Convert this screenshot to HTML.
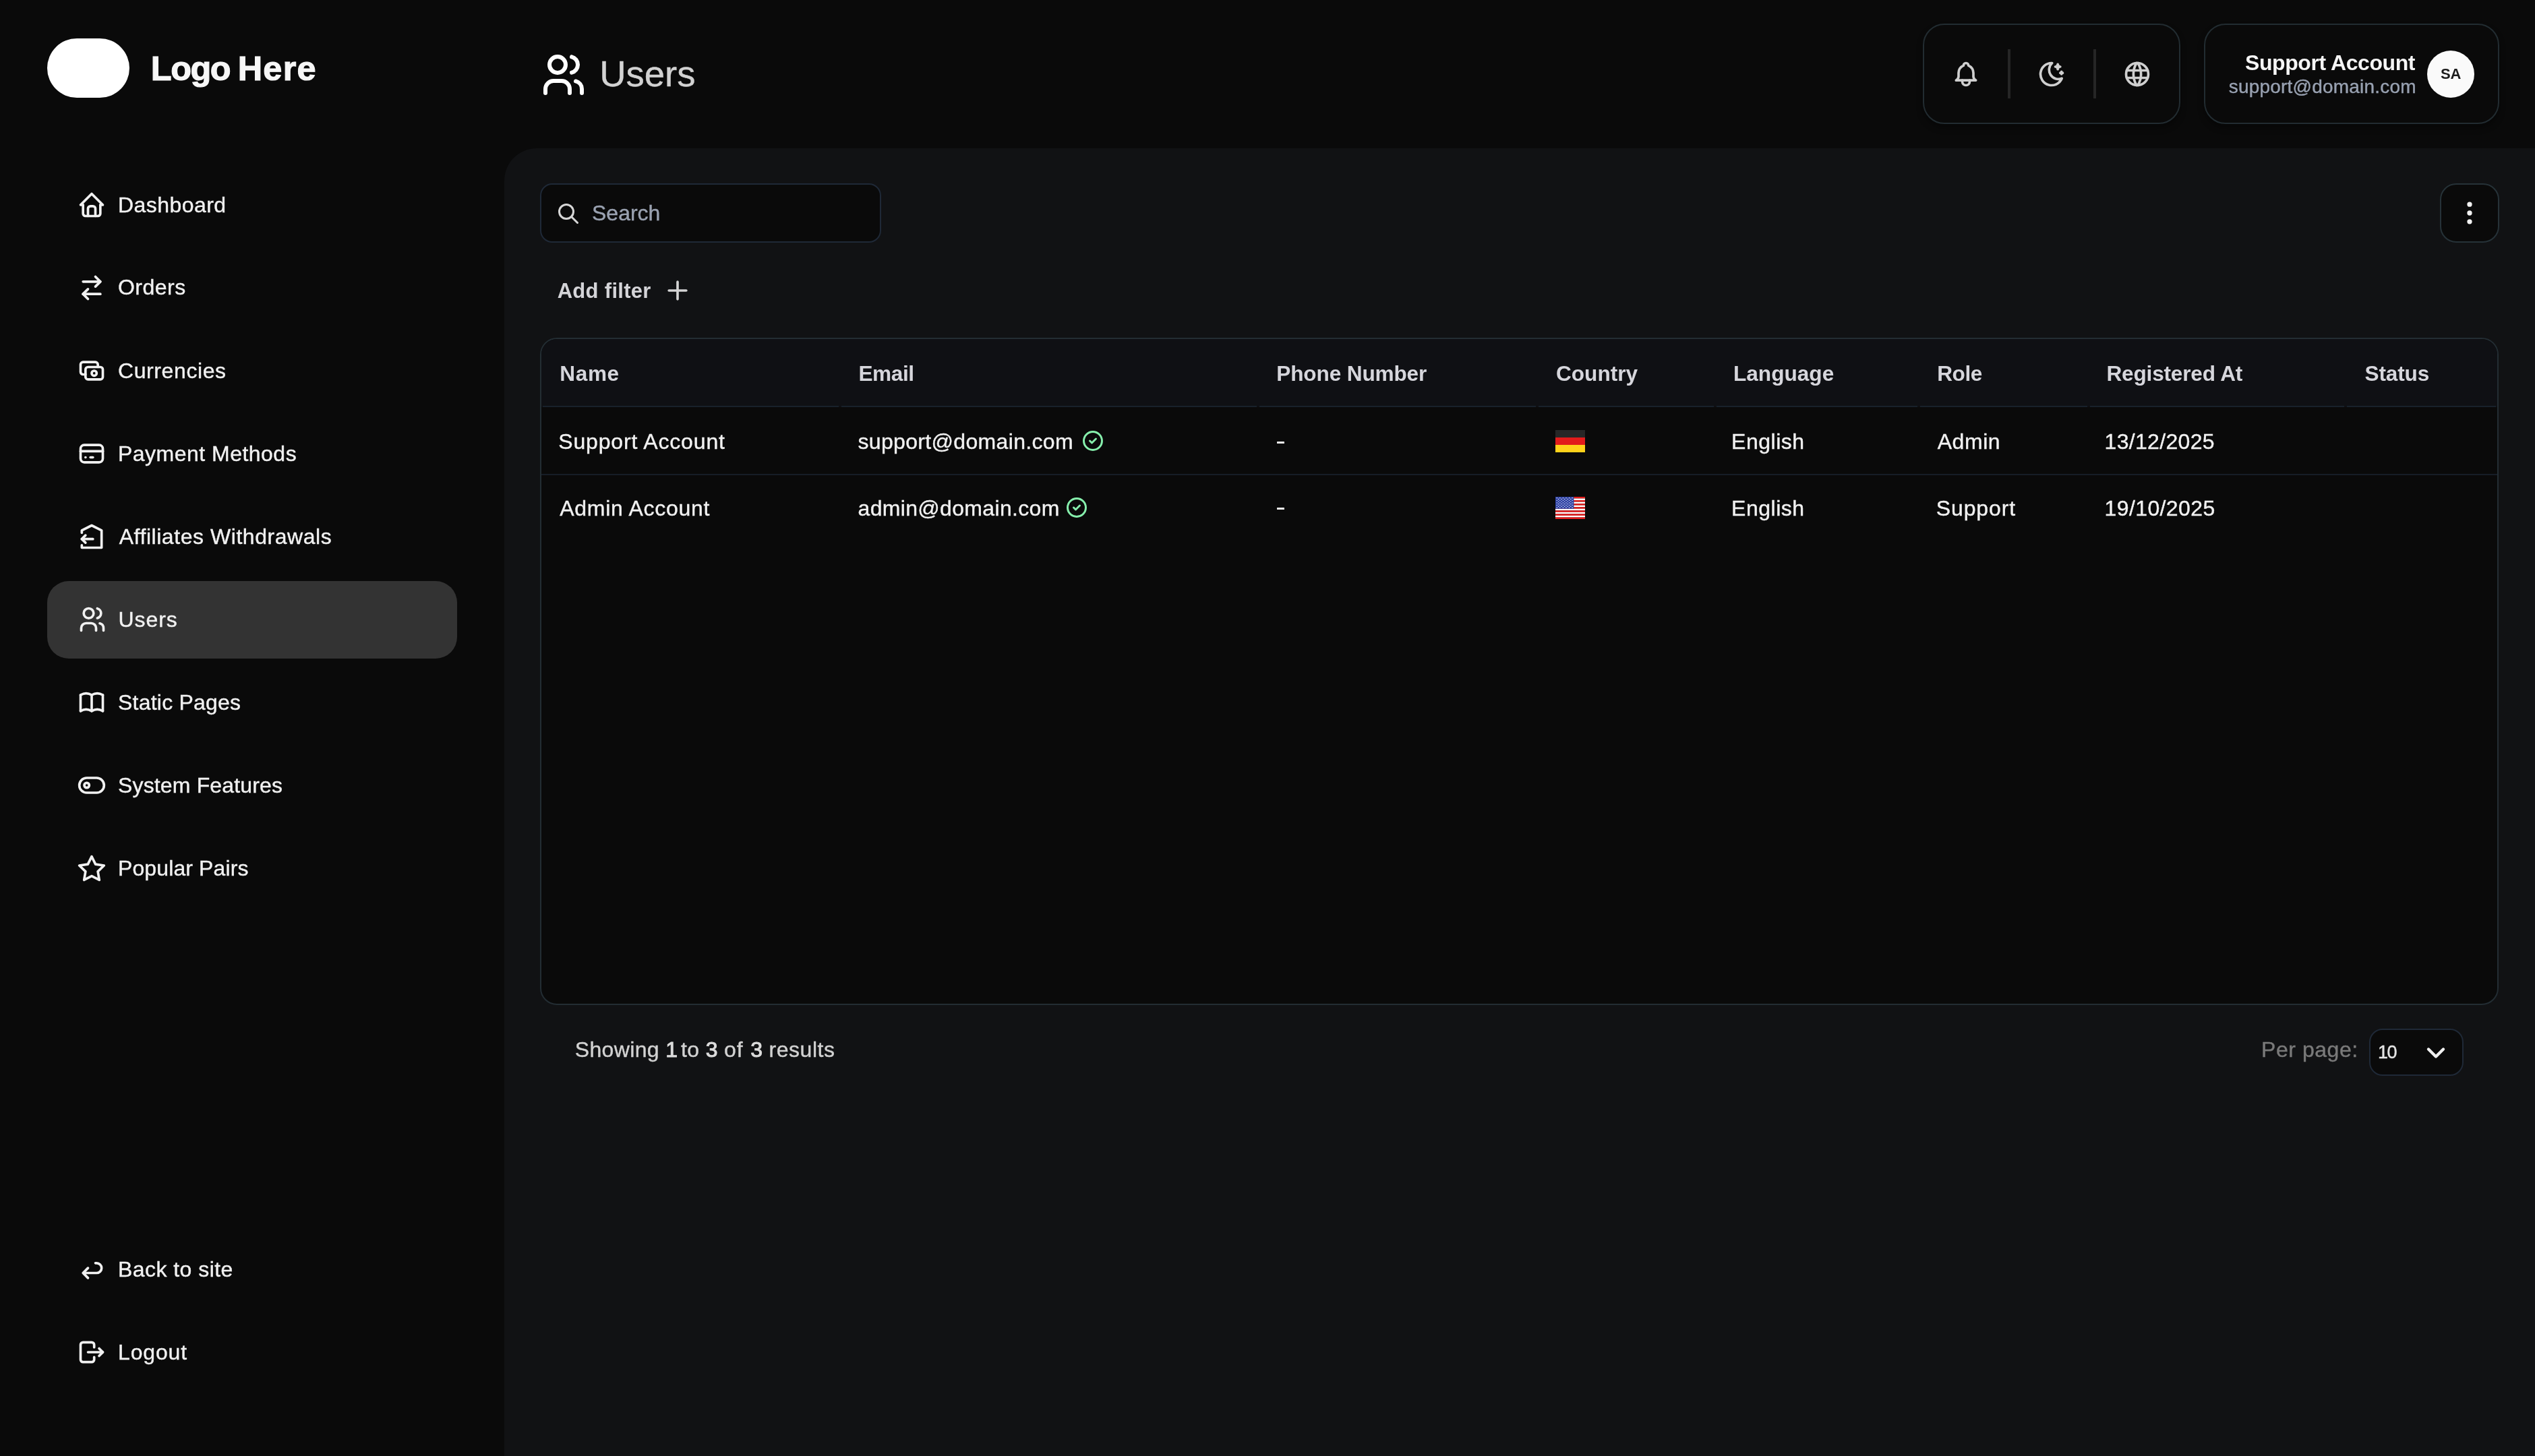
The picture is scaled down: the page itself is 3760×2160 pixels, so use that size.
<!DOCTYPE html>
<html lang="en">
<head>
<meta charset="utf-8">
<title>Users</title>
<style>
*{box-sizing:border-box;margin:0;padding:0}
html,body{width:3760px;height:2160px;overflow:hidden;background:#0a0a0a}
body{font-family:"Liberation Sans",sans-serif;color:#f2f2f2;position:relative;-webkit-font-smoothing:antialiased}
.abs{position:absolute}
#root{position:absolute;left:0;top:0;width:3760px;height:2160px;will-change:transform;transform:translateZ(0)}
svg.ic{display:block;fill:none;stroke:currentColor;stroke-width:2;stroke-linecap:round;stroke-linejoin:round}
/* sidebar */
.pill{left:70px;top:57px;width:121.5px;height:88px;border-radius:44px;background:#fff}
.logo{left:223.8px;top:72.5px;font-size:50.5px;font-weight:700;letter-spacing:-0.1px;word-spacing:-2.5px;color:#f7f7f7;line-height:58px;white-space:nowrap;-webkit-text-stroke:1.1px currentColor}
.nav{left:70px;width:608px;height:115px;border-radius:32px;display:flex;align-items:center;padding-left:44px;font-size:32px;color:#f1f1f1;white-space:nowrap}
.nav svg{width:44px;height:44px;margin-right:17px;flex:none;position:relative;top:-0.4px}
.nav.on{background:#333333}
/* header */
.hicon{left:800px;top:74.5px;width:72px;height:72px;color:#fff}
.htitle{left:889.2px;top:78.5px;font-size:54.5px;line-height:62px;color:#d2d2d2;letter-spacing:0.0px;white-space:nowrap}
.box{border:2px solid #222c31;background:#0a0a0a;border-radius:32px;box-shadow:0 6px 10px rgba(0,0,0,.35)}
.igrp{left:2852px;top:35px;width:382px;height:149px}
.igrp svg{position:absolute;top:51px;width:44px;height:44px;color:#cfcfcf}
.igrp i{position:absolute;top:36px;width:4px;height:73px;background:#262626}
.acct{left:3269px;top:35px;width:438px;height:149px}
.aname{right:123px;top:37.3px;font-size:32px;font-weight:700;letter-spacing:-0.42px;line-height:38px;color:#f5f5f5;white-space:nowrap}
.amail{right:121.3px;top:75.6px;font-size:28px;letter-spacing:0.2px;line-height:32px;color:#98a1b1;white-space:nowrap}
.avatar{left:329px;top:37.5px;width:70px;height:70px;border-radius:50%;background:#fafafa;color:#1c1c1c;font-weight:700;font-size:22px;display:flex;align-items:center;justify-content:center;letter-spacing:-0.4px}
/* panel */
.panel{left:748px;top:220px;width:3012px;height:1940px;background:#111214;border-top-left-radius:48px}
.search{left:801px;top:272px;width:506px;height:88px;border:2px solid #1f2937;border-radius:18px;background:#0a0a0a}
.search svg{position:absolute;left:22px;top:25px;width:36px;height:36px;color:#d6d6d6}
.search span{position:absolute;left:75px;top:22.7px;font-size:32px;line-height:38px;color:#9aa2b1}
.dots{left:3619px;top:272px;width:88px;height:88px;border:2px solid #263238;border-radius:24px;background:#0a0a0a}
.dots svg{position:absolute;left:20px;top:20px;width:44px;height:44px;color:#f2f2f2}
.addf{left:826.7px;top:413px;font-size:31px;font-weight:700;line-height:38px;color:#d4d4d8;white-space:nowrap;letter-spacing:0.3px}
.plus{left:983px;top:409px;width:44px;height:44px;color:#d4d4d4}
/* table */
.tbl{left:801px;top:501px;width:2905px;height:989.5px;border:2px solid #232d33;border-radius:25px;background:#0a0a0a;overflow:hidden}
.thead{position:absolute;left:0;top:0;width:100%;height:101px;background:#0f1014}
.th{position:absolute;top:0;height:101px;font-size:31.6px;font-weight:700;color:#d6d6dc;line-height:102px;padding-left:27px;white-space:nowrap}
.th::after{content:"";position:absolute;left:2px;right:2px;bottom:0;height:2px;background:#18212b}
.row{position:absolute;left:0;width:100%;height:99px}
.row .ln{position:absolute;left:0;right:0;bottom:-2px;height:2px;background:#161d27}
.td{position:absolute;top:0;height:99px;line-height:99px;font-size:32px;color:#f1f1f1;padding-left:26px;white-space:nowrap}
.flag{position:absolute;left:26.8px;top:34px;width:44.4px;height:33px;display:block}
.chk{position:absolute;top:32px;width:36px;height:36px;color:#86efac}
.nav,.td,.showing,.pp,.search span,.amail,.htitle,.sel span{-webkit-text-stroke:0.4px currentColor}
.dash{position:absolute;left:28.4px;width:11px;height:3.4px;background:#f1f1f1;border-radius:0.5px}
/* footer */
.showing{left:852.8px;top:1537.5px;font-size:32px;line-height:38px;color:#d2d2d2;letter-spacing:0.34px;white-space:nowrap}
.showing b{font-weight:400;color:#dcdcdc;-webkit-text-stroke:1px currentColor}
.pp{left:3354px;top:1537.5px;font-size:32px;line-height:38px;color:#7a7a7a;white-space:nowrap;letter-spacing:0.55px}
.sel{left:3514px;top:1526px;width:140px;height:70px;border:2px solid #1f2937;border-radius:20px;background:#0a0a0a}
.sel span{position:absolute;left:11px;top:17.3px;font-size:27px;line-height:32px;color:#e4e4e4;letter-spacing:-1.6px}
.sel svg{position:absolute;left:75px;top:12px;width:44px;height:44px;color:#f0f0f0;stroke-width:2.4}
</style>
</head>
<body>
<div id="root">
<div class="abs pill"></div>
<div class="abs logo"><span style="letter-spacing:-1.5px">Logo</span> <span style="letter-spacing:1.25px">Here</span></div>
<div class="abs nav" style="top:246.6px;letter-spacing:0.44px"><svg class="ic" viewBox="0 0 24 24"><path d="M5 12l-2 0l9 -9l9 9l-2 0"/><path d="M5 12v7a2 2 0 0 0 2 2h10a2 2 0 0 0 2 -2v-7"/><path d="M9 21v-6a2 2 0 0 1 2 -2h2a2 2 0 0 1 2 2v6"/></svg>Dashboard</div>
<div class="abs nav" style="top:369.4px;letter-spacing:0.48px"><svg class="ic" viewBox="0 0 24 24"><path d="M5 7h14"/><path d="M15 3l4 4l-4 4"/><path d="M19 17h-14"/><path d="M9 13l-4 4l4 4"/></svg>Orders</div>
<div class="abs nav" style="top:492.6px;letter-spacing:0.6px"><svg class="ic" viewBox="0 0 24 24"><path d="M7 9m0 2a2 2 0 0 1 2 -2h10a2 2 0 0 1 2 2v6a2 2 0 0 1 -2 2h-10a2 2 0 0 1 -2 -2z"/><path d="M14 14m-2 0a2 2 0 1 0 4 0a2 2 0 1 0 -4 0"/><path d="M17 9v-2a2 2 0 0 0 -2 -2h-10a2 2 0 0 0 -2 2v6a2 2 0 0 0 2 2h2"/></svg>Currencies</div>
<div class="abs nav" style="top:615.7px;letter-spacing:0.48px"><svg class="ic" viewBox="0 0 24 24"><path d="M3 5m0 3a3 3 0 0 1 3 -3h12a3 3 0 0 1 3 3v8a3 3 0 0 1 -3 3h-12a3 3 0 0 1 -3 -3z"/><path d="M3 10l18 0"/><path d="M7 15l.01 0"/><path d="M11 15l2 0"/></svg>Payment Methods</div>
<div class="abs nav" style="top:738.9px;letter-spacing:0.55px"><svg class="ic" style="margin-right:18.7px" viewBox="0 0 24 24"><path d="M4 19v2h16v-14l-8 -4l-8 4v2"/><path d="M13 14h-9"/><path d="M7 11l-3 3l3 3"/></svg>Affiliates Withdrawals</div>
<div class="abs nav on" style="top:862px;letter-spacing:0.9px;padding-left:44.6px"><svg class="ic" viewBox="0 0 24 24"><path d="M9 7m-4 0a4 4 0 1 0 8 0a4 4 0 1 0 -8 0"/><path d="M3 21v-2a4 4 0 0 1 4 -4h4a4 4 0 0 1 4 4v2"/><path d="M16 3.13a4 4 0 0 1 0 7.75"/><path d="M21 21v-2a4 4 0 0 0 -3 -3.85"/></svg>Users</div>
<div class="abs nav" style="top:985.1px;letter-spacing:0.22px"><svg class="ic" viewBox="0 0 24 24"><path d="M3 19a9 9 0 0 1 9 0a9 9 0 0 1 9 0"/><path d="M3 6a9 9 0 0 1 9 0a9 9 0 0 1 9 0"/><path d="M3 6l0 13"/><path d="M12 6l0 13"/><path d="M21 6l0 13"/></svg>Static Pages</div>
<div class="abs nav" style="top:1108.3px;letter-spacing:0.15px"><svg class="ic" viewBox="0 0 24 24"><path d="M8 12m-2 0a2 2 0 1 0 4 0a2 2 0 1 0 -4 0"/><path d="M2 6m0 6a6 6 0 0 1 6 -6h8a6 6 0 0 1 6 6v0a6 6 0 0 1 -6 6h-8a6 6 0 0 1 -6 -6z"/></svg>System Features</div>
<div class="abs nav" style="top:1231.4px;letter-spacing:0.11px"><svg class="ic" viewBox="0 0 24 24"><path d="M12 17.75l-6.172 3.245l1.179 -6.873l-5 -4.867l6.9 -1l3.086 -6.253l3.086 6.253l6.9 1l-5 4.867l1.179 6.873z"/></svg>Popular Pairs</div>
<div class="abs nav" style="top:1826px;letter-spacing:0.45px"><svg class="ic" viewBox="0 0 24 24"><path d="M9 11l-4 4l4 4m-4 -4h11a4 4 0 0 0 0 -8h-1"/></svg>Back to site</div>
<div class="abs nav" style="top:1949px;letter-spacing:0.85px"><svg class="ic" viewBox="0 0 24 24"><path d="M14 8v-2a2 2 0 0 0 -2 -2h-7a2 2 0 0 0 -2 2v12a2 2 0 0 0 2 2h7a2 2 0 0 0 2 -2v-2"/><path d="M9 12h12l-3 -3"/><path d="M18 15l3 -3"/></svg>Logout</div>

<svg class="ic abs hicon" viewBox="0 0 24 24"><path d="M9 7m-4 0a4 4 0 1 0 8 0a4 4 0 1 0 -8 0"/><path d="M3 21v-2a4 4 0 0 1 4 -4h4a4 4 0 0 1 4 4v2"/><path d="M16 3.13a4 4 0 0 1 0 7.75"/><path d="M21 21v-2a4 4 0 0 0 -3 -3.85"/></svg>
<div class="abs htitle">Users</div>
<div class="abs box igrp">
<svg class="ic" style="left:40px" viewBox="0 0 24 24"><path d="M10 5a2 2 0 1 1 4 0a7 7 0 0 1 4 6v3a4 4 0 0 0 2 3h-16a4 4 0 0 0 2 -3v-3a7 7 0 0 1 4 -6"/><path d="M9 17v1a3 3 0 0 0 6 0v-1"/></svg>
<i style="left:124px"></i>
<svg class="ic" style="left:167px" viewBox="0 0 24 24"><path d="M12 3c.132 0 .263 0 .393 0a7.5 7.5 0 0 0 7.92 12.446a9 9 0 1 1 -8.313 -12.454z"/><path d="M17 4a2 2 0 0 0 2 2a2 2 0 0 0 -2 2a2 2 0 0 0 -2 -2a2 2 0 0 0 2 -2"/><path d="M19 11h2m-1 -1v2"/></svg>
<i style="left:251px"></i>
<svg class="ic" style="left:294px" viewBox="0 0 24 24"><path d="M3 12a9 9 0 1 0 18 0a9 9 0 0 0 -18 0"/><path d="M3.6 9h16.800"/><path d="M3.6 15h16.800"/><path d="M11.5 3a17 17 0 0 0 0 18"/><path d="M12.5 3a17 17 0 0 1 0 18"/></svg>
</div>
<div class="abs box acct">
<div class="abs aname">Support Account</div>
<div class="abs amail">support@domain.com</div>
<div class="abs avatar">SA</div>
</div>

<div class="abs panel"></div>
<div class="abs search"><svg class="ic" viewBox="0 0 24 24"><path d="M10 10m-7 0a7 7 0 1 0 14 0a7 7 0 1 0 -14 0"/><path d="M21 21l-6 -6"/></svg><span>Search</span></div>
<div class="abs dots"><svg class="ic" viewBox="0 0 24 24"><path d="M12 12m-1 0a1 1 0 1 0 2 0a1 1 0 1 0 -2 0"/><path d="M12 19m-1 0a1 1 0 1 0 2 0a1 1 0 1 0 -2 0"/><path d="M12 5m-1 0a1 1 0 1 0 2 0a1 1 0 1 0 -2 0"/></svg></div>
<div class="abs addf">Add filter</div>
<svg class="ic abs plus" viewBox="0 0 24 24"><path d="M12 5l0 14"/><path d="M5 12l14 0"/></svg>
<!--TBL--><div class="abs tbl"><div class="thead"><div class="th" style="left:0px;width:443px;padding-left:27.3px;letter-spacing:0.6px">Name</div><div class="th" style="left:443px;width:620px;padding-left:27.5px;letter-spacing:-0.45px">Email</div><div class="th" style="left:1063px;width:414px;padding-left:27.3px;letter-spacing:-0.15px">Phone Number</div><div class="th" style="left:1477px;width:264px;padding-left:28px;letter-spacing:0.0px">Country</div><div class="th" style="left:1741px;width:302px;padding-left:27px;letter-spacing:0.0px">Language</div><div class="th" style="left:2043px;width:251.5px;padding-left:27.3px;letter-spacing:-0.5px">Role</div><div class="th" style="left:2294.5px;width:381.5px;padding-left:27px;letter-spacing:-0.2px">Registered At</div><div class="th" style="left:2676px;width:225px;padding-left:28.5px;letter-spacing:-0.15px">Status</div></div><div class="row" style="top:101px;height:99px"><div class="td" style="left:0px;width:443px;height:99px;line-height:102.4px;padding-left:25.2px;letter-spacing:0.85px">Support Account</div><div class="td" style="left:443px;width:620px;height:99px;line-height:102.4px;padding-left:26.5px;letter-spacing:0.33px">support@domain.com<svg class="ic chk" style="left:356.5px;top:32px" viewBox="0 0 24 24"><path d="M12 12m-9 0a9 9 0 1 0 18 0a9 9 0 1 0 -18 0"/><path d="M9 12l2 2l4 -4"/></svg></div><div class="td" style="left:1063px;width:414px;height:99px;line-height:102.4px;padding-left:26px;letter-spacing:0px"><i class="dash" style="top:50.9px"></i></div><div class="td" style="left:1477px;width:264px;height:99px;line-height:102.4px;padding-left:26px;letter-spacing:0px"><svg class="flag" style="top:34px" viewBox="0 0 44.4 33" preserveAspectRatio="none"><rect width="44.4" height="11" fill="#272727"/><rect y="11" width="44.4" height="11" fill="#e21b1b"/><rect y="22" width="44.4" height="11" fill="#ffd21a"/></svg></div><div class="td" style="left:1741px;width:302px;height:99px;line-height:102.4px;padding-left:24.1px;letter-spacing:0.5px">English</div><div class="td" style="left:2043px;width:251.5px;height:99px;line-height:102.4px;padding-left:27.7px;letter-spacing:0.57px">Admin</div><div class="td" style="left:2294.5px;width:381.5px;height:99px;line-height:102.4px;padding-left:24px;letter-spacing:0.33px">13/12/2025</div><div class="td" style="left:2676px;width:225px;height:99px;line-height:102.4px;padding-left:26px;letter-spacing:0px"></div><div class="ln"></div></div><div class="row" style="top:202px;height:96px"><div class="td" style="left:0px;width:443px;height:96px;line-height:98px;padding-left:27.2px;letter-spacing:0.73px">Admin Account</div><div class="td" style="left:443px;width:620px;height:96px;line-height:98px;padding-left:26.5px;letter-spacing:0.33px">admin@domain.com<svg class="ic chk" style="left:332.5999999999999px;top:30px" viewBox="0 0 24 24"><path d="M12 12m-9 0a9 9 0 1 0 18 0a9 9 0 1 0 -18 0"/><path d="M9 12l2 2l4 -4"/></svg></div><div class="td" style="left:1063px;width:414px;height:96px;line-height:98px;padding-left:26px;letter-spacing:0px"><i class="dash" style="top:48px"></i></div><div class="td" style="left:1477px;width:264px;height:96px;line-height:98px;padding-left:26px;letter-spacing:0px"><svg class="flag" style="top:31.6px" viewBox="0 0 44.4 33" preserveAspectRatio="none"><rect y="0.000" width="44.4" height="2.588" fill="#e31d1c"/><rect y="2.538" width="44.4" height="2.588" fill="#ffffff"/><rect y="5.077" width="44.4" height="2.588" fill="#e31d1c"/><rect y="7.615" width="44.4" height="2.588" fill="#ffffff"/><rect y="10.154" width="44.4" height="2.588" fill="#e31d1c"/><rect y="12.692" width="44.4" height="2.588" fill="#ffffff"/><rect y="15.231" width="44.4" height="2.588" fill="#e31d1c"/><rect y="17.769" width="44.4" height="2.588" fill="#ffffff"/><rect y="20.308" width="44.4" height="2.588" fill="#e31d1c"/><rect y="22.846" width="44.4" height="2.588" fill="#ffffff"/><rect y="25.385" width="44.4" height="2.588" fill="#e31d1c"/><rect y="27.923" width="44.4" height="2.588" fill="#ffffff"/><rect y="30.462" width="44.4" height="2.588" fill="#e31d1c"/><rect width="27.4" height="17.77" fill="#2e42a5"/><circle cx="2.28" cy="1.78" r="0.68" fill="#fff"/><circle cx="6.85" cy="1.78" r="0.68" fill="#fff"/><circle cx="11.42" cy="1.78" r="0.68" fill="#fff"/><circle cx="15.98" cy="1.78" r="0.68" fill="#fff"/><circle cx="20.55" cy="1.78" r="0.68" fill="#fff"/><circle cx="25.12" cy="1.78" r="0.68" fill="#fff"/><circle cx="4.57" cy="3.55" r="0.68" fill="#fff"/><circle cx="9.13" cy="3.55" r="0.68" fill="#fff"/><circle cx="13.70" cy="3.55" r="0.68" fill="#fff"/><circle cx="18.27" cy="3.55" r="0.68" fill="#fff"/><circle cx="22.83" cy="3.55" r="0.68" fill="#fff"/><circle cx="2.28" cy="5.33" r="0.68" fill="#fff"/><circle cx="6.85" cy="5.33" r="0.68" fill="#fff"/><circle cx="11.42" cy="5.33" r="0.68" fill="#fff"/><circle cx="15.98" cy="5.33" r="0.68" fill="#fff"/><circle cx="20.55" cy="5.33" r="0.68" fill="#fff"/><circle cx="25.12" cy="5.33" r="0.68" fill="#fff"/><circle cx="4.57" cy="7.11" r="0.68" fill="#fff"/><circle cx="9.13" cy="7.11" r="0.68" fill="#fff"/><circle cx="13.70" cy="7.11" r="0.68" fill="#fff"/><circle cx="18.27" cy="7.11" r="0.68" fill="#fff"/><circle cx="22.83" cy="7.11" r="0.68" fill="#fff"/><circle cx="2.28" cy="8.88" r="0.68" fill="#fff"/><circle cx="6.85" cy="8.88" r="0.68" fill="#fff"/><circle cx="11.42" cy="8.88" r="0.68" fill="#fff"/><circle cx="15.98" cy="8.88" r="0.68" fill="#fff"/><circle cx="20.55" cy="8.88" r="0.68" fill="#fff"/><circle cx="25.12" cy="8.88" r="0.68" fill="#fff"/><circle cx="4.57" cy="10.66" r="0.68" fill="#fff"/><circle cx="9.13" cy="10.66" r="0.68" fill="#fff"/><circle cx="13.70" cy="10.66" r="0.68" fill="#fff"/><circle cx="18.27" cy="10.66" r="0.68" fill="#fff"/><circle cx="22.83" cy="10.66" r="0.68" fill="#fff"/><circle cx="2.28" cy="12.44" r="0.68" fill="#fff"/><circle cx="6.85" cy="12.44" r="0.68" fill="#fff"/><circle cx="11.42" cy="12.44" r="0.68" fill="#fff"/><circle cx="15.98" cy="12.44" r="0.68" fill="#fff"/><circle cx="20.55" cy="12.44" r="0.68" fill="#fff"/><circle cx="25.12" cy="12.44" r="0.68" fill="#fff"/><circle cx="4.57" cy="14.22" r="0.68" fill="#fff"/><circle cx="9.13" cy="14.22" r="0.68" fill="#fff"/><circle cx="13.70" cy="14.22" r="0.68" fill="#fff"/><circle cx="18.27" cy="14.22" r="0.68" fill="#fff"/><circle cx="22.83" cy="14.22" r="0.68" fill="#fff"/><circle cx="2.28" cy="15.99" r="0.68" fill="#fff"/><circle cx="6.85" cy="15.99" r="0.68" fill="#fff"/><circle cx="11.42" cy="15.99" r="0.68" fill="#fff"/><circle cx="15.98" cy="15.99" r="0.68" fill="#fff"/><circle cx="20.55" cy="15.99" r="0.68" fill="#fff"/><circle cx="25.12" cy="15.99" r="0.68" fill="#fff"/></svg></div><div class="td" style="left:1741px;width:302px;height:96px;line-height:98px;padding-left:24.1px;letter-spacing:0.5px">English</div><div class="td" style="left:2043px;width:251.5px;height:96px;line-height:98px;padding-left:25.7px;letter-spacing:0.9px">Support</div><div class="td" style="left:2294.5px;width:381.5px;height:96px;line-height:98px;padding-left:24px;letter-spacing:0.4px">19/10/2025</div><div class="td" style="left:2676px;width:225px;height:96px;line-height:98px;padding-left:26px;letter-spacing:0px"></div></div></div><!--/TBL-->
<div class="abs showing">Showing <b>1</b><span style="margin-left:-4.5px"> to </span><b>3</b> <span style="letter-spacing:1px">of</span> <b style="margin-left:1.2px">3</b> <span style="letter-spacing:0.55px">results</span></div>
<div class="abs pp">Per page:</div>
<div class="abs sel"><span>10</span><svg class="ic" viewBox="0 0 24 24"><path d="M6 9l6 6l6 -6"/></svg></div>

</div>
</body>
</html>
